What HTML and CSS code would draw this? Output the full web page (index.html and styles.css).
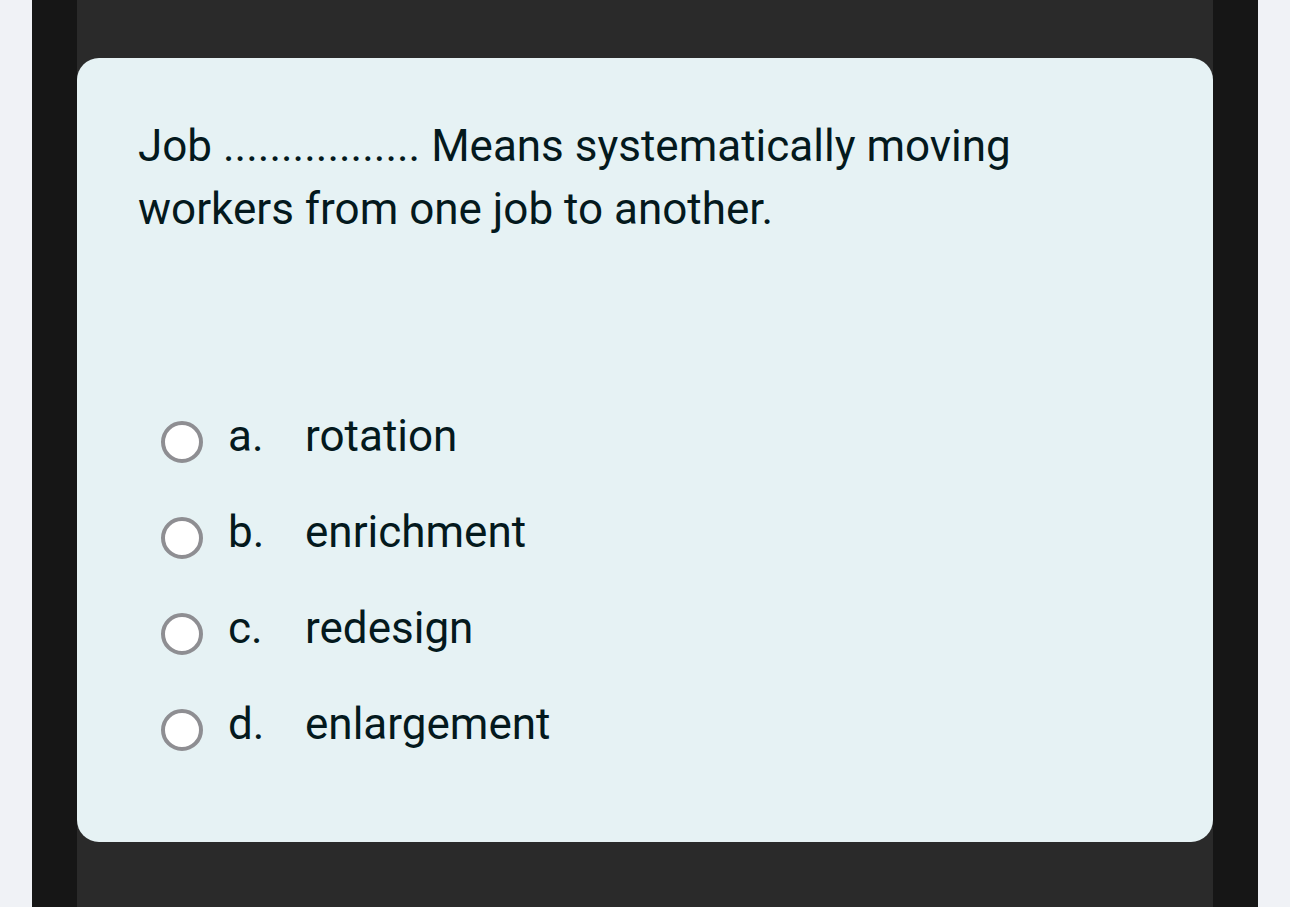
FILE: index.html
```html
<!DOCTYPE html>
<html>
<head>
<meta charset="utf-8">
<link rel="stylesheet" href="styles.css">
</head>
<body>
<div class="frame">
  <div class="side"></div>
  <div class="main">
    <div class="card">
      <p class="question">Job ................. Means systematically moving workers from one job to another.</p>
      <ul class="options">
        <li class="option"><span class="radio"></span><span class="letter">a.</span><span class="text">rotation</span></li>
        <li class="option"><span class="radio"></span><span class="letter">b.</span><span class="text">enrichment</span></li>
        <li class="option"><span class="radio"></span><span class="letter">c.</span><span class="text">redesign</span></li>
        <li class="option"><span class="radio"></span><span class="letter">d.</span><span class="text">enlargement</span></li>
      </ul>
    </div>
  </div>
  <div class="side"></div>
</div>
</body>
</html>
```
FILE: styles.css
```css
html, body {
  margin: 0;
  padding: 0;
  height: 100%;
}
body {
  background: #f0f2f6;
  font-family: Roboto, "Noto Sans", sans-serif;
  overflow: hidden;
}
.frame {
  display: flex;
  margin: 0 32px;
  height: 907px;
}
.side {
  width: 45px;
  background: #161616;
  flex: none;
}
.main {
  flex: 1;
  background: #2a2a2a;
  padding-top: 58px;
}
.card {
  background: #e6f2f4;
  border-radius: 22px;
  height: 784px;
  box-sizing: border-box;
  padding: 57px 60px 0 61px;
  color: #04191d;
}
.question {
  margin: 0;
  font-size: 44px;
  line-height: 63px;
  max-width: 940px;
}
.options {
  list-style: none;
  margin: 147px 0 0 0;
  padding: 0 0 0 23px;
}
.option {
  display: flex;
  align-items: center;
  height: 96px;
  font-size: 44px;
}
.radio {
  width: 34px;
  height: 34px;
  margin-top: 12px;
  border: 4px solid #8e8e92;
  border-radius: 50%;
  background: #fff;
  flex: none;
}
.letter {
  width: 77px;
  margin-left: 25px;
}
```
